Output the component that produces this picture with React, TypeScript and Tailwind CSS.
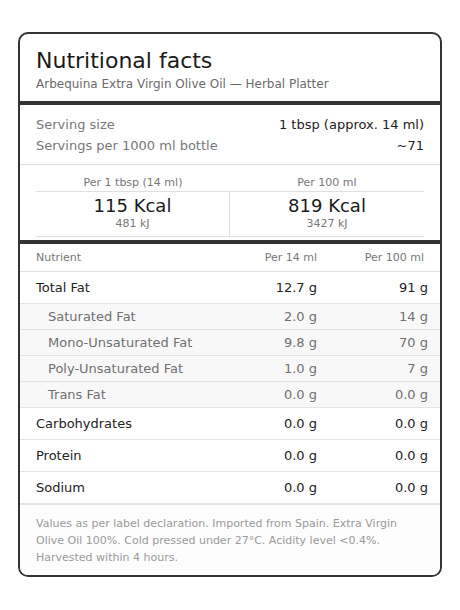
const nutrients = [
  { name: "Total Fat", per14: "12.7 g", per100: "91 g", sub: false },
  { name: "Saturated Fat", per14: "2.0 g", per100: "14 g", sub: true },
  { name: "Mono-Unsaturated Fat", per14: "9.8 g", per100: "70 g", sub: true },
  { name: "Poly-Unsaturated Fat", per14: "1.0 g", per100: "7 g", sub: true },
  { name: "Trans Fat", per14: "0.0 g", per100: "0.0 g", sub: true },
  { name: "Carbohydrates", per14: "0.0 g", per100: "0.0 g", sub: false },
  { name: "Protein", per14: "0.0 g", per100: "0.0 g", sub: false },
  { name: "Sodium", per14: "0.0 g", per100: "0.0 g", sub: false },
];

export default function App() {
  return (
    <div
      className="min-h-screen bg-white px-[18px] pt-[32px] pb-[33px]"
      style={{ fontFamily: '"DejaVu Sans", Verdana, sans-serif' }}
    >
      <div className="overflow-hidden rounded-[10px] border-2 border-[#333] bg-white">
        {/* Header */}
        <div className="border-b-4 border-[#333] px-4 pt-[14px] pb-[8px]">
          <h1 className="text-[22px] leading-[26px] text-[#1a1a1a]">Nutritional facts</h1>
          <p className="pt-[1px] text-[12px] leading-[18px] text-[#6b6b6b]">
            Arbequina Extra Virgin Olive Oil — Herbal Platter
          </p>
        </div>

        {/* Serving */}
        <div className="border-b border-[#e0e0e0] px-4 pt-[9px] pb-2 text-[13px] leading-[21px]">
          <div className="flex justify-between">
            <span className="text-[#777]">Serving size</span>
            <span className="text-[#222]">1 tbsp (approx. 14 ml)</span>
          </div>
          <div className="flex justify-between">
            <span className="text-[#777]">Servings per 1000 ml bottle</span>
            <span className="text-[#222]">~71</span>
          </div>
        </div>

        {/* Calories */}
        <div className="border-b-4 border-[#333] px-4 pt-[11px] pb-[3px]">
          <div className="grid grid-cols-2 border-b border-[#e0e0e0] text-center text-[11px] leading-[14px] text-[#777]">
            <div className="pb-[1px]">Per 1 tbsp (14 ml)</div>
            <div className="pb-[1px]">Per 100 ml</div>
          </div>
          <div className="grid grid-cols-2 border-b border-[#e0e0e0] text-center">
            <div className="border-r border-[#e0e0e0] pt-[3px] pb-[5px]">
              <div className="text-[18px] leading-[22px] text-[#1a1a1a]">115 Kcal</div>
              <div className="text-[11px] leading-[14px] text-[#777]">481 kJ</div>
            </div>
            <div className="pt-[3px] pb-[5px]">
              <div className="text-[18px] leading-[22px] text-[#1a1a1a]">819 Kcal</div>
              <div className="text-[11px] leading-[14px] text-[#777]">3427 kJ</div>
            </div>
          </div>
        </div>

        {/* Table */}
        <div className="grid grid-cols-[1fr_100px_107px] border-b border-[#e0e0e0] px-4 pt-[6px] pb-[5px] text-[11px] leading-[16px] text-[#777]">
          <div>Nutrient</div>
          <div className="text-right">Per 14 ml</div>
          <div className="text-right">Per 100 ml</div>
        </div>
        {nutrients.map((n, i) => (
          <div
            key={n.name}
            className={`grid grid-cols-[1fr_100px_111px] text-[13px] leading-[19px] ${
              i === nutrients.length - 1 ? "" : "border-b border-[#e3e3e3]"
            } ${
              n.sub
                ? "bg-[#f8f8f8] py-[3px] pl-7 pr-3 text-[#707070]"
                : "py-[6px] pl-4 pr-3 text-[#222]"
            }`}
          >
            <div>{n.name}</div>
            <div className="text-right">{n.per14}</div>
            <div className="text-right">{n.per100}</div>
          </div>
        ))}

        {/* Footer */}
        <div className="border-t-2 border-[#e3e3e3] bg-[#fdfdfd] px-4 pt-[10px] pb-[9px] text-[11px] leading-[17px] text-[#9a9a9a]">
          Values as per label declaration. Imported from Spain. Extra Virgin Olive Oil 100%. Cold
          pressed under 27°C. Acidity level &lt;0.4%. Harvested within 4 hours.
        </div>
      </div>
    </div>
  );
}
